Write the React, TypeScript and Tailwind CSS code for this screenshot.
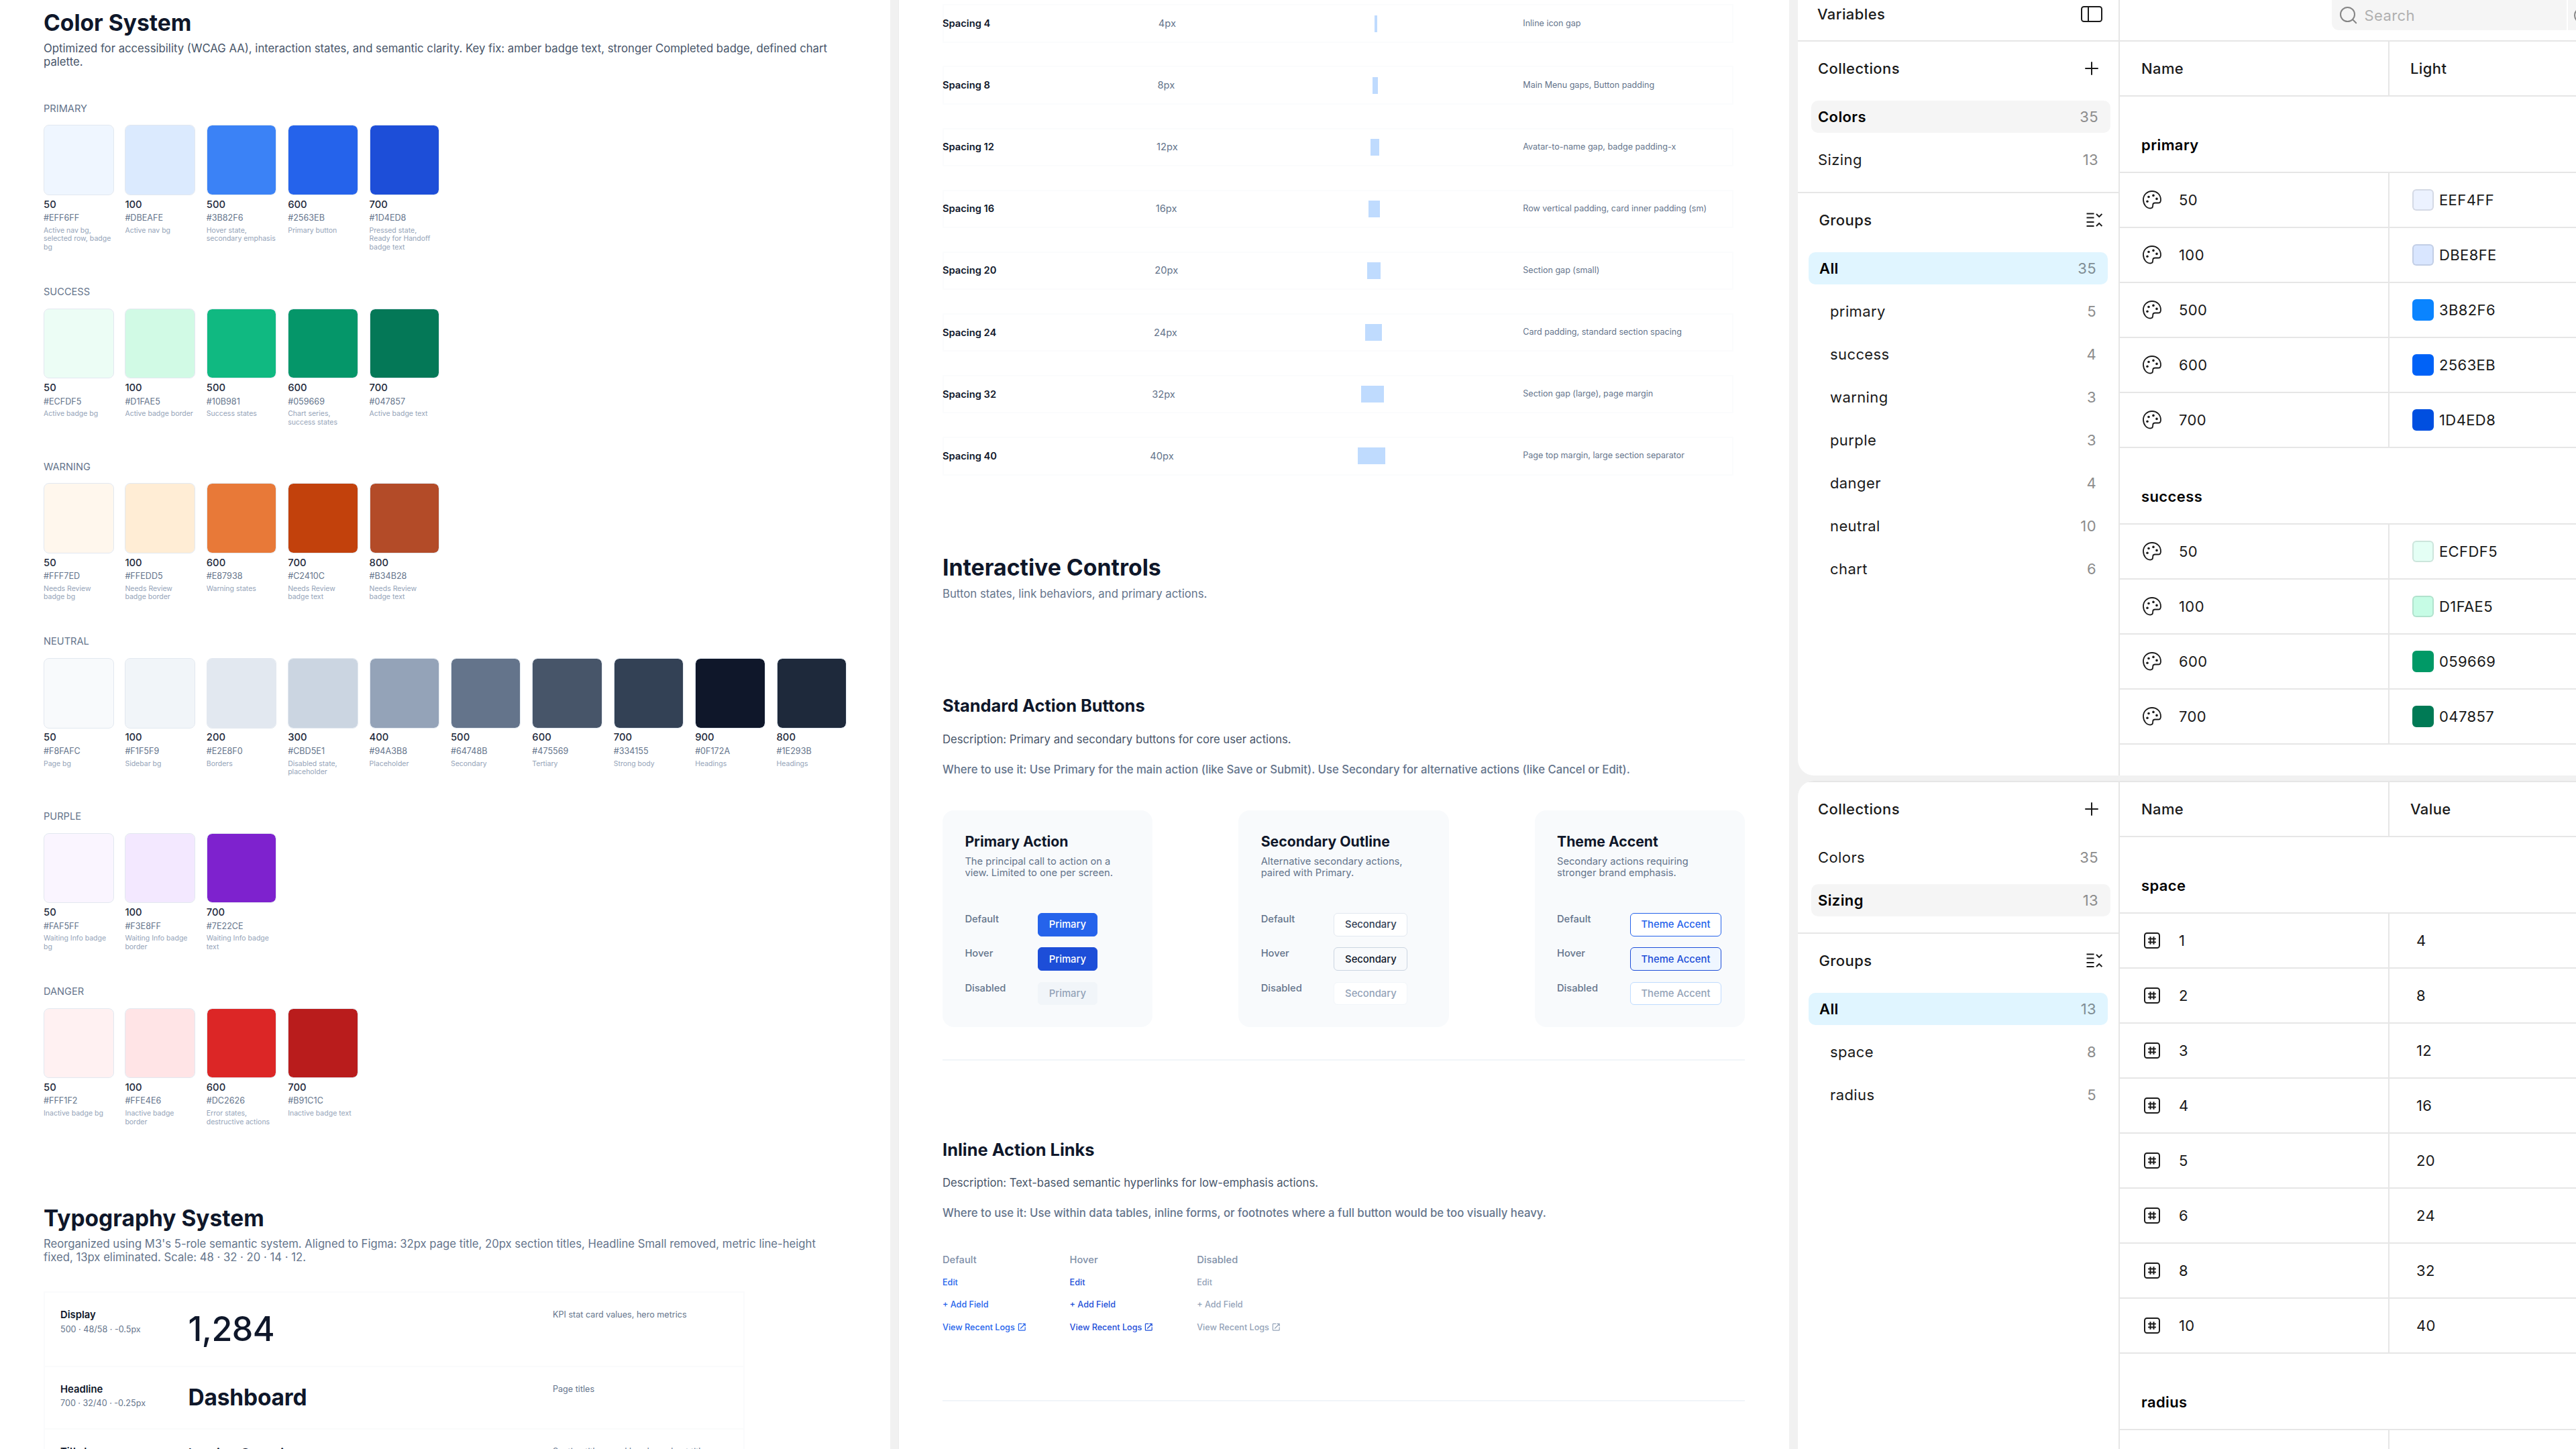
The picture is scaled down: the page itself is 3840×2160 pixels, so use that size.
import React from "react";
import { MdOpenInNew } from "react-icons/md";

type Swatch = { name: string; hex: string; color?: string; use: string[] };

const palettes: { title: string; swatches: Swatch[] }[] = [
  {
    title: "PRIMARY",
    swatches: [
      { name: "50", hex: "#EFF6FF", use: ["Active nav bg,", "selected row, badge", "bg"] },
      { name: "100", hex: "#DBEAFE", use: ["Active nav bg"] },
      { name: "500", hex: "#3B82F6", use: ["Hover state,", "secondary emphasis"] },
      { name: "600", hex: "#2563EB", use: ["Primary button"] },
      { name: "700", hex: "#1D4ED8", use: ["Pressed state,", "Ready for Handoff", "badge text"] },
    ],
  },
  {
    title: "SUCCESS",
    swatches: [
      { name: "50", hex: "#ECFDF5", use: ["Active badge bg"] },
      { name: "100", hex: "#D1FAE5", use: ["Active badge border"] },
      { name: "500", hex: "#10B981", use: ["Success states"] },
      { name: "600", hex: "#059669", use: ["Chart series,", "success states"] },
      { name: "700", hex: "#047857", use: ["Active badge text"] },
    ],
  },
  {
    title: "WARNING",
    swatches: [
      { name: "50", hex: "#FFF7ED", use: ["Needs Review", "badge bg"] },
      { name: "100", hex: "#FFEDD5", use: ["Needs Review", "badge border"] },
      { name: "600", hex: "#E87938", use: ["Warning states"] },
      { name: "700", hex: "#C2410C", use: ["Needs Review", "badge text"] },
      { name: "800", hex: "#B34B28", use: ["Needs Review", "badge text"] },
    ],
  },
  {
    title: "NEUTRAL",
    swatches: [
      { name: "50", hex: "#F8FAFC", use: ["Page bg"] },
      { name: "100", hex: "#F1F5F9", use: ["Sidebar bg"] },
      { name: "200", hex: "#E2E8F0", use: ["Borders"] },
      { name: "300", hex: "#CBD5E1", use: ["Disabled state,", "placeholder"] },
      { name: "400", hex: "#94A3B8", use: ["Placeholder"] },
      { name: "500", hex: "#64748B", use: ["Secondary"] },
      { name: "600", hex: "#475569", use: ["Tertiary"] },
      { name: "700", hex: "#334155", use: ["Strong body"] },
      { name: "900", hex: "#0F172A", use: ["Headings"] },
      { name: "800", hex: "#1E293B", use: ["Headings"] },
    ],
  },
  {
    title: "PURPLE",
    swatches: [
      { name: "50", hex: "#FAF5FF", use: ["Waiting Info badge", "bg"] },
      { name: "100", hex: "#F3E8FF", use: ["Waiting Info badge", "border"] },
      { name: "700", hex: "#7E22CE", use: ["Waiting Info badge", "text"] },
    ],
  },
  {
    title: "DANGER",
    swatches: [
      { name: "50", hex: "#FFF1F2", use: ["Inactive badge bg"] },
      { name: "100", hex: "#FFE4E6", use: ["Inactive badge", "border"] },
      { name: "600", hex: "#DC2626", use: ["Error states,", "destructive actions"] },
      { name: "700", hex: "#B91C1C", use: ["Inactive badge text"] },
    ],
  },
];

function ColorBlock({ title, swatches }: { title: string; swatches: Swatch[] }) {
  return (
    <section>
      <h3 className="text-[14.6px] leading-[18px] text-[#64748b]">{title}</h3>
      <div className="mt-[15.9px] flex gap-[16.9px]">
        {swatches.map((s) => (
          <div key={s.name} className="w-[104.5px]">
            <div
              className="h-[104.5px] rounded-[8px] border border-[#e2e8f0] bg-clip-padding"
              style={{ backgroundColor: s.hex }}
            />
            <div className="mt-[3.7px] text-[14.8px] font-medium leading-[20px] text-[#1e293b]">{s.name}</div>
            <div className="mt-[1.7px] text-[12.6px] leading-[18px] text-[#64748b]">{s.hex}</div>
            <div className="mt-[3.6px] text-[10.5px] leading-[12.53px] text-[#94a3b8]">
              {s.use.map((line) => (
                <div key={line} className="whitespace-nowrap">
                  {line}
                </div>
              ))}
            </div>
          </div>
        ))}
      </div>
    </section>
  );
}

function TypeRow({
  name,
  spec,
  use,
  height,
  children,
}: {
  name: string;
  spec: string;
  use: string;
  height: string;
  children: React.ReactNode;
}) {
  return (
    <div className={`flex border-t-2 border-[#fafbfc] pl-[23px] pt-[24.2px] ${height}`}>
      <div className="w-[190.5px] shrink-0">
        <div className="text-[14.8px] font-semibold leading-[18px] text-[#0f172a]">{name}</div>
        <div className="mt-[3.3px] text-[12.6px] leading-[18px] text-[#64748b]">{spec}</div>
      </div>
      <div className="w-[543.5px] shrink-0 text-[#0f172a]">{children}</div>
      <div className="whitespace-nowrap text-[12.6px] leading-[17px] text-[#64748b]">{use}</div>
    </div>
  );
}

function LeftPanel() {
  return (
    <div className="h-full w-[1327px] shrink-0 bg-white pl-[65px] pt-[13.7px]">
      <h1 className="text-[33.6px] font-bold leading-[40px] text-[#0f172a]">Color System</h1>
      <p className="mt-[8.5px] text-[16.73px] leading-[20px] text-[#475569]">
        Optimized for accessibility (WCAG AA), interaction states, and semantic clarity. Key fix: amber badge text,
        stronger Completed badge, defined chart
        <br />
        palette.
      </p>
      <div className="mt-[50.4px] flex flex-col gap-[50.3px]">
        {palettes.map((p) => (
          <ColorBlock key={p.title} {...p} />
        ))}
      </div>
      <h1 className="mt-[116.4px] text-[33.5px] font-bold leading-[40px] text-[#0f172a]">Typography System</h1>
      <p className="mt-[8.6px] text-[16.71px] leading-[20px] text-[#64748b]">
        Reorganized using M3's 5-role semantic system. Aligned to Figma: 32px page title, 20px section titles, Headline
        Small removed, metric line-height
        <br />
        fixed, 13px eliminated. Scale: 48 · 32 · 20 · 14 · 12.
      </p>
      <div className="mt-[41px] w-[1045px] border-x-2 border-[#fafbfc]">
        <TypeRow name="Display" spec="500 · 48/58 · -0.5px" use="KPI stat card values, hero metrics" height="h-[110.8px]">
          <div className="text-[50.1px] font-medium leading-[60px] tracking-[-0.52px]">1,284</div>
        </TypeRow>
        <TypeRow name="Headline" spec="700 · 32/40 · -0.25px" use="Page titles" height="h-[92.7px]">
          <div className="text-[33.5px] font-bold leading-[42px] tracking-[-0.2px]">Dashboard</div>
        </TypeRow>
        <TypeRow name="Title Large" spec="600 · 20/24" use="Section titles, card headers, sheet titles" height="h-[90px]">
          <div className="text-[20.9px] font-medium leading-[25px]">Invoice Overview</div>
        </TypeRow>
      </div>
    </div>
  );
}

const spacings = [
  { size: 4, width: "w-[4.2px]", use: "Inline icon gap" },
  { size: 8, width: "w-[8.4px]", use: "Main Menu gaps, Button padding" },
  { size: 12, width: "w-[12.5px]", use: "Avatar-to-name gap, badge padding-x" },
  { size: 16, width: "w-[16.7px]", use: "Row vertical padding, card inner padding (sm)" },
  { size: 20, width: "w-[20.9px]", use: "Section gap (small)" },
  { size: 24, width: "w-[25px]", use: "Card padding, standard section spacing" },
  { size: 32, width: "w-[33.4px]", use: "Section gap (large), page margin" },
  { size: 40, width: "w-[41.8px]", use: "Page top margin, large section separator" },
];

const cards = [
  {
    title: "Primary Action",
    lines: ["The principal call to action on a", "view. Limited to one per screen."],
    label: "Primary",
    states: [
      "border-[#2563eb] bg-[#2563eb] text-white",
      "border-[#1d4ed8] bg-[#1d4ed8] text-white",
      "border-[#f1f5f9] bg-[#f1f5f9] text-[#94a3b8]",
    ],
  },
  {
    title: "Secondary Outline",
    lines: ["Alternative secondary actions,", "paired with Primary."],
    label: "Secondary",
    states: [
      "border-[#e2e8f0] bg-white text-[#334155]",
      "border-[#cbd5e1] bg-[#f8fafc] text-[#0f172a]",
      "border-[#f1f5f9] bg-white text-[#94a3b8]",
    ],
  },
  {
    title: "Theme Accent",
    lines: ["Secondary actions requiring", "stronger brand emphasis."],
    label: "Theme Accent",
    states: [
      "border-[#2563eb] bg-white text-[#2563eb]",
      "border-[#1d4ed8] bg-[#eff6ff] text-[#1d4ed8]",
      "border-[#bfdbfe] bg-white text-[#94a3b8]",
    ],
  },
];

const stateNames = ["Default", "Hover", "Disabled"];
const linkColors = ["text-[#2563eb]", "text-[#1d4ed8]", "text-[#94a3b8]"];

function MiddlePanel() {
  return (
    <div className="ml-[12px] h-full w-[1328px] shrink-0 border-l border-[#ececec] bg-white pl-[65px] pt-[6.4px]">
      <div className="flex flex-col gap-[34.6px]">
        {spacings.map((s) => (
          <div
            key={s.size}
            className="flex h-[57.5px] w-[1178.7px] items-center justify-between ring-2 ring-inset ring-[#fbfcfd]"
          >
            <div className="w-[104.5px] text-[14.7px] font-semibold text-[#0f172a]">Spacing {s.size}</div>
            <div className="w-[104.5px] text-[14.7px] text-[#64748b]">{s.size}px</div>
            <div className={`h-[25px] bg-[#bfdbfe] ${s.width}`} />
            <div className="w-[313.4px] whitespace-nowrap text-[12.55px] text-[#64748b]">{s.use}</div>
          </div>
        ))}
      </div>

      <h1 className="mt-[117.2px] text-[33.8px] font-bold leading-[40px] text-[#0f172a]">Interactive Controls</h1>
      <p className="mt-[9px] text-[16.75px] leading-[20px] text-[#64748b]">
        Button states, link behaviors, and primary actions.
      </p>

      <h2 className="mt-[142px] text-[25.4px] font-bold leading-[30px] text-[#0f172a]">Standard Action Buttons</h2>
      <p className="mt-[25.3px] text-[16.7px] leading-[20px] text-[#475569]">
        Description: Primary and secondary buttons for core user actions.
      </p>
      <p className="mt-[24.7px] text-[16.72px] font-medium leading-[20px] text-[#64748b]">
        Where to use it: Use Primary for the main action (like Save or Submit). Use Secondary for alternative actions
        (like Cancel or Edit).
      </p>

      <div className="mt-[51px] flex w-[1196px] justify-between">
        {cards.map((c) => (
          <div key={c.title} className="h-[323.5px] w-[313.4px] rounded-[17px] bg-[#f8fafc] pl-[33.4px] pt-[32.8px]">
            <h3 className="whitespace-nowrap text-[21.2px] font-bold leading-[26px] text-[#0f172a]">{c.title}</h3>
            <div className="mt-[9.3px] text-[14.7px] leading-[17.5px] text-[#64748b]">
              {c.lines.map((l) => (
                <div key={l} className="whitespace-nowrap">
                  {l}
                </div>
              ))}
            </div>
            <div className="mt-[50px] flex flex-col gap-[16.6px]">
              {stateNames.map((n, i) => (
                <div key={n} className="flex h-[34.8px] items-start">
                  <div className="w-[108.8px] text-[14.7px] font-medium leading-[18px] text-[#64748b]">{n}</div>
                  <div
                    className={`flex h-[34.8px] items-center whitespace-nowrap rounded-[6px] border-[1.5px] px-[15.6px] text-[14.8px] font-[550] ${c.states[i]}`}
                  >
                    {c.label}
                  </div>
                </div>
              ))}
            </div>
          </div>
        ))}
      </div>

      <div className="mt-[47.7px] h-[2px] w-[1196px] bg-[#f1f5f9]" />

      <h2 className="mt-[117.7px] text-[25.4px] font-bold leading-[30px] text-[#0f172a]">Inline Action Links</h2>
      <p className="mt-[24.6px] text-[16.7px] leading-[20px] text-[#475569]">
        Description: Text-based semantic hyperlinks for low-emphasis actions.
      </p>
      <p className="mt-[25.2px] text-[16.74px] font-medium leading-[20px] text-[#64748b]">
        Where to use it: Use within data tables, inline forms, or footnotes where a full button would be too visually
        heavy.
      </p>

      <div className="mt-[50.5px] flex">
        {stateNames.map((n, i) => (
          <div key={n} className="flex w-[189.6px] flex-col">
            <div className="text-[14.7px] font-medium leading-[18px] text-[#8190a8]">{n}</div>
            <div className={`mt-[16px] flex flex-col gap-[15.4px] text-[12.6px] font-medium leading-[18px] ${linkColors[i]}`}>
              <div>Edit</div>
              <div>+ Add Field</div>
              <div className="flex items-center gap-[3px]">
                View Recent Logs <MdOpenInNew className="size-[14.6px]" />
              </div>
            </div>
          </div>
        ))}
      </div>

      <div className="mt-[99px] h-[2px] w-[1196px] bg-[#f1f5f9]" />
    </div>
  );
}

function PaletteIcon() {
  return (
    <svg width="28" height="28" viewBox="0 0 28 28" fill="none" className="shrink-0">
      <path
        d="M14 1C6.6 1 1 6.6 1 13.4c0 7.4 4.6 13.1 10.2 13.1 2.6 0 4-1.6 4-4v-.7c0-2 1.2-3.3 3.3-3.3h4.7c2.3 0 3.8-1.8 3.8-4.6C27 6.600 21.600 1 14 1Z"
        stroke="#1a1a1a"
        strokeWidth="1.8"
        strokeLinejoin="round"
      />
      <circle cx="9" cy="9.500" r="1.800" fill="#1a1a1a" />
      <circle cx="16" cy="7.400" r="1.800" fill="#1a1a1a" />
      <circle cx="21" cy="12.400" r="1.800" fill="#1a1a1a" />
      <circle cx="7" cy="16.200" r="1.800" fill="#1a1a1a" />
    </svg>
  );
}

function NumberIcon() {
  return (
    <svg width="28" height="28" viewBox="0 0 28 28" fill="none" stroke="#1a1a1a" strokeWidth="2" className="shrink-0">
      <rect x="3" y="3" width="22" height="22" rx="3.5" />
      <path d="M11.500 8.200v11.600M16.500 8.200v11.600M8.200 11.500h11.600M8.200 16.500h11.600" />
    </svg>
  );
}

function PlusIcon() {
  return (
    <svg width="20" height="20" viewBox="0 0 20 20" stroke="#1a1a1a" strokeWidth="2" strokeLinecap="round">
      <path d="M10 1v18M1 10h18" />
    </svg>
  );
}

function CollapseIcon() {
  return (
    <svg width="24" height="22" viewBox="0 0 24 22" fill="none" stroke="#1a1a1a" strokeWidth="2">
      <path d="M0.500 1.600h11M0.500 7.600h11M0.500 14h11M0.500 20h11" />
      <path d="m15 2 4.200 4.200L23.400 2M15 20l4.200-4.200 4.200 4.200" />
    </svg>
  );
}

type Entry = [string, number];

function Sidebar({ selected, groups }: { selected: string; groups: Entry[] }) {
  const collections: Entry[] = [
    ["Colors", 35],
    ["Sizing", 13],
  ];
  return (
    <div className="flex-1 border-t-2 border-[#e6e6e6]">
      <div className="flex h-[80px] items-center justify-between pl-[30px] pr-[30px] font-[550]">
        Collections
        <PlusIcon />
      </div>
      <div className="flex flex-col gap-[16px] pb-[24px] pl-[20px] pr-[12px] pt-[8px]">
        {collections.map(([name, count]) => (
          <div
            key={name}
            className={`flex h-[48px] items-center justify-between rounded-[10px] pl-[10px] pr-[18px] ${
              name === selected ? "bg-[#f5f5f5] font-semibold text-black" : ""
            }`}
          >
            {name}
            <span className="font-normal text-[#8c8c8c]">{count}</span>
          </div>
        ))}
      </div>
      <div className="flex h-[82px] items-center justify-between border-t-2 border-[#e6e6e6] pl-[31.5px] pr-[24px] font-[550]">
        Groups
        <CollapseIcon />
      </div>
      <div className="flex flex-col gap-[16px] pl-[16px] pr-[16px] pt-[8px]">
        {groups.map(([name, count], i) => (
          <div
            key={name}
            className={`flex h-[48px] items-center justify-between rounded-[10px] pr-[17px] ${
              i === 0 ? "bg-[#e0f5ff] pl-[16px] font-semibold text-black" : "pl-[32px]"
            }`}
          >
            {name}
            <span className={`font-normal ${i === 0 ? "text-[#7f8d94]" : "text-[#8c8c8c]"}`}>{count}</span>
          </div>
        ))}
      </div>
    </div>
  );
}

function HeaderRow({ value }: { value: string }) {
  return (
    <div className="flex h-[82px] items-stretch border-t-2 border-[#e6e6e6] font-[550]">
      <div className="flex w-[402px] items-center border-r-2 border-[#e6e6e6] pl-[32px]">Name</div>
      <div className="flex items-center pl-[31px]">{value}</div>
    </div>
  );
}

function GroupHeading({ name }: { name: string }) {
  return (
    <div className="h-[114px] border-t-2 border-[#e6e6e6] pl-[32px] pt-[58px] font-semibold leading-[28px] text-black">
      {name}
    </div>
  );
}

function ColorRow({ name, hex, swatch }: { name: string; hex: string; swatch: string }) {
  return (
    <div className="flex h-[82px] items-stretch border-t-2 border-[#e6e6e6]">
      <div className="flex w-[402px] items-center gap-[26px] border-r-2 border-[#e6e6e6] pl-[34px]">
        <PaletteIcon />
        {name}
      </div>
      <div className="flex items-center gap-[8px] pl-[34px]">
        <span className={`size-[32px] rounded-[6px] border-2 ${swatch}`} />
        {hex}
      </div>
    </div>
  );
}

function SizeRow({ name, value }: { name: string; value: string }) {
  return (
    <div className="flex h-[82px] shrink-0 items-stretch border-t-2 border-[#e6e6e6]">
      <div className="flex w-[402px] items-center gap-[26px] border-r-2 border-[#e6e6e6] pl-[34px]">
        <NumberIcon />
        {name}
      </div>
      <div className="flex items-center pl-[40px]">{value}</div>
    </div>
  );
}

function ColorVariables() {
  return (
    <div className="flex h-[1156px] shrink-0 overflow-hidden rounded-bl-[24px] bg-white">
      <div className="flex w-[480px] shrink-0 flex-col border-r-2 border-[#e6e6e6]">
        <div className="flex h-[60px] items-center justify-between pb-[18px] pl-[29px] pr-[24px] font-[550]">
          Variables
          <svg width="32" height="24" viewBox="0 0 32 24" fill="none" stroke="#1a1a1a" strokeWidth="2">
            <rect x="1" y="1" width="30" height="22" rx="3.500" />
            <path d="M11 1v22" />
          </svg>
        </div>
        <Sidebar
          selected="Colors"
          groups={[
            ["All", 35],
            ["primary", 5],
            ["success", 4],
            ["warning", 3],
            ["purple", 3],
            ["danger", 4],
            ["neutral", 10],
            ["chart", 6],
          ]}
        />
      </div>
      <div className="w-[680px] shrink-0 overflow-hidden">
        <div className="flex h-[60px] gap-[2px] pl-[316px]">
          <div className="flex h-[45px] w-[350px] shrink-0 items-center rounded-bl-[10px] bg-[#f5f5f5] pl-[12px]">
            <svg width="26" height="26" viewBox="0 0 26 26" fill="none" stroke="#858585" strokeWidth="2" strokeLinecap="round">
              <circle cx="11.500" cy="11.500" r="10.500" />
              <path d="m19 19 5.200 5.200" />
            </svg>
            <span className="ml-[10.500px] text-[#b0b0b0]">Search</span>
          </div>
          <div className="flex h-[45px] w-[60px] shrink-0 items-center bg-[#f5f5f5] pl-[9px]">
            <span className="size-[24px] shrink-0 rounded-full border-2 border-[#858585]" />
          </div>
        </div>
        <HeaderRow value="Light" />
        <GroupHeading name="primary" />
        <ColorRow name="50" hex="EEF4FF" swatch="border-black/10 bg-[#ecf2ff]" />
        <ColorRow name="100" hex="DBE8FE" swatch="border-black/10 bg-[#d9e6ff]" />
        <ColorRow name="500" hex="3B82F6" swatch="border-[#0a84ff] bg-[#0a84ff]" />
        <ColorRow name="600" hex="2563EB" swatch="border-[#0062f7] bg-[#0062f7]" />
        <ColorRow name="700" hex="1D4ED8" swatch="border-[#004fe0] bg-[#004fe0]" />
        <GroupHeading name="success" />
        <ColorRow name="50" hex="ECFDF5" swatch="border-black/10 bg-[#e4fff5]" />
        <ColorRow name="100" hex="D1FAE5" swatch="border-black/10 bg-[#c6fce5]" />
        <ColorRow name="600" hex="059669" swatch="border-[#009966] bg-[#009966]" />
        <ColorRow name="700" hex="047857" swatch="border-[#007a55] bg-[#007a55]" />
        <div className="border-t-2 border-[#e6e6e6]" />
      </div>
    </div>
  );
}

function SizeVariables() {
  return (
    <div className="mt-[8px] flex h-[996px] shrink-0 overflow-hidden rounded-tl-[24px] bg-white">
      <div className="flex w-[480px] shrink-0 flex-col border-r-2 border-[#e6e6e6]">
        <Sidebar
          selected="Sizing"
          groups={[
            ["All", 13],
            ["space", 8],
            ["radius", 5],
          ]}
        />
      </div>
      <div className="w-[680px] shrink-0">
        <HeaderRow value="Value" />
        <GroupHeading name="space" />
        <SizeRow name="1" value="4" />
        <SizeRow name="2" value="8" />
        <SizeRow name="3" value="12" />
        <SizeRow name="4" value="16" />
        <SizeRow name="5" value="20" />
        <SizeRow name="6" value="24" />
        <SizeRow name="8" value="32" />
        <SizeRow name="10" value="40" />
        <GroupHeading name="radius" />
        <div className="flex h-[82px] border-t-2 border-[#e6e6e6]">
          <div className="w-[402px] border-r-2 border-[#e6e6e6]" />
        </div>
      </div>
    </div>
  );
}

export default function App() {
  return (
    <div className="flex h-[2160px] w-[3840px] overflow-hidden bg-[#f1f1f1] font-['Inter',sans-serif] antialiased">
      <LeftPanel />
      <MiddlePanel />
      <div className="ml-[13px] flex h-full w-[1160px] shrink-0 flex-col text-[22px] leading-[28px] tracking-[0.4px] text-[#1a1a1a]">
        <ColorVariables />
        <SizeVariables />
      </div>
    </div>
  );
}
